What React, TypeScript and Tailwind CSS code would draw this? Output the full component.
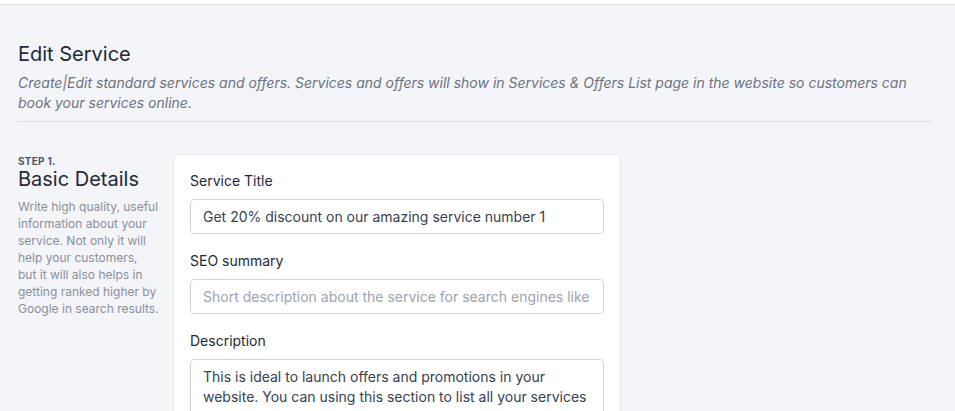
import React from 'react';

export default function App() {
    return (
        <div className="min-h-screen bg-[#f4f5f9] font-['Inter',sans-serif] text-gray-800">
            {/* top bar */}
            <div className="h-[5px] bg-white border-b border-[#e4e5e9]" />

            <div className="pl-[18px] pr-[24px]">
                <header className="pt-[35px] pb-[8px] border-b border-[#dcdde1]">
                    <h1 className="text-[20px] leading-[28px] text-[#1f2937]">Edit Service</h1>
                    <p className="mt-[5px] text-[14px] leading-[20px] italic text-[#6b7280]">
                        Create|Edit standard services and offers. Services and offers will show in Services &amp; Offers List page in the website so customers can book your services online.
                    </p>
                </header>

                <div className="flex gap-[15px] pt-[32px]">
                    {/* Step info */}
                    <div className="w-[140px] shrink-0">
                        <div className="text-[10px] leading-[12px] font-bold uppercase tracking-wide text-[#4b5563] mt-[1px]">Step 1.</div>
                        <h2 className="text-[20px] leading-[24px] text-[#1f2937]">Basic Details</h2>
                        <p className="mt-[7px] text-[12px] leading-[17px] text-[#8b9099] whitespace-nowrap">
                            Write high quality, useful<br />
                            information about your<br />
                            service. Not only it will<br />
                            help your customers,<br />
                            but it will also helps in<br />
                            getting ranked higher by<br />
                            Google in search results.
                        </p>
                    </div>

                    {/* Card */}
                    <div className="w-[448px] bg-white border border-[#e5e7eb] rounded-md px-[16px] pt-[16px] pb-6">
                        <div className="flex flex-col gap-[17px]">
                            <div>
                                <label className="block text-[14px] leading-[20px] text-[#1f2937]">Service Title</label>
                                <input
                                    className="mt-[8px] w-full h-[35px] px-[12px] text-[14px] text-[#374151] border border-[#d1d5db] rounded-[4px] outline-none bg-white"
                                    defaultValue="Get 20% discount on our amazing service number 1"
                                />
                            </div>
                            <div>
                                <label className="block text-[14px] leading-[20px] text-[#1f2937]">SEO summary</label>
                                <input
                                    className="mt-[8px] w-full h-[35px] px-[12px] text-[14px] text-[#374151] placeholder:text-[#9ca3af] border border-[#d1d5db] rounded-[4px] outline-none bg-white"
                                    placeholder="Short description about the service for search engines like Google"
                                />
                            </div>
                            <div>
                                <label className="block text-[14px] leading-[20px] text-[#1f2937]">Description</label>
                                <textarea
                                    rows={5}
                                    className="mt-[8px] w-full px-[12px] py-[7px] text-[14px] leading-[20px] text-[#374151] border border-[#d1d5db] rounded-[4px] outline-none resize-none bg-white"
                                    defaultValue="This is ideal to launch offers and promotions in your website. You can using this section to list all your services and offers and customers can book them online."
                                />
                            </div>
                        </div>
                    </div>
                </div>
            </div>
        </div>
    );
}
